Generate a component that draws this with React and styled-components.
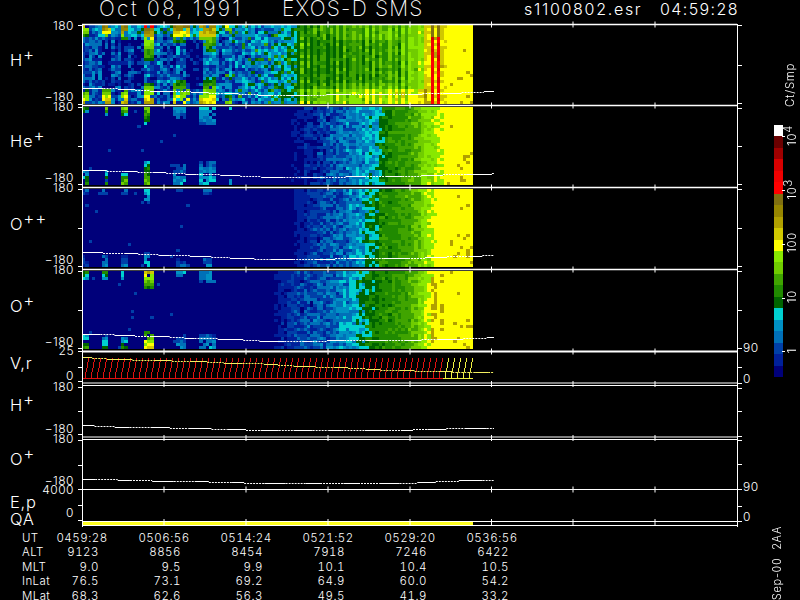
import React from 'react'
import styled, { createGlobalStyle } from 'styled-components'

const GlobalStyle = createGlobalStyle`
  html, body { margin: 0; padding: 0; background: #000; }
  #root { width: 800px; height: 600px; overflow: hidden; }
`

const PALETTE = [
  '#00007a', '#00209a', '#0040a8', '#0070b8', '#0090c4', '#00d0d0',
  '#006400', '#208a00', '#40a400', '#70cc00', '#88e800', '#ffff00',
  '#d0c800', '#b0a000', '#968600', '#807010', '#ff0000', '#f00000',
  '#d80000', '#a00000', '#6a0000', '#ffffff',
]

const TICK_X = [164, 246, 328, 410, 491.5, 573, 655]
const ROWS = 26
const COLS = 120

const Page = styled.div`
  width: 800px;
  height: 600px;
  display: flex;
  background: #000;
  color: #fff;
  font-family: Inter, "Liberation Sans", sans-serif;
  font-weight: 300;
  overflow: hidden;
`
const Main = styled.div`
  width: 770px;
  flex: none;
`
const TitleBar = styled.div`
  height: 24px;
  padding-left: 99px;
  display: grid;
  grid-template-columns: 183px 242px 136px auto;
  align-items: center;
  box-sizing: border-box;
  padding-bottom: 7px;
  white-space: nowrap;
`
const BigTitle = styled.span`
  font-size: 21px;
  font-weight: 200;
  letter-spacing: ${p => p.$spacing}px;
  line-height: 16px;
`
const SmallTitle = styled.span`
  font-size: 16px;
  letter-spacing: ${p => p.$spacing}px;
  line-height: 14px;
`
const Row = styled.div`
  height: ${p => p.$h}px;
  display: flex;
`
const Gutter = styled.div`
  width: 78px;
  flex: none;
  box-sizing: border-box;
  padding-left: 10px;
  display: flex;
`
const Species = styled.div`
  width: 44px;
  flex: none;
  margin-top: ${p => p.$top}px;
  display: flex;
  flex-direction: column;
  gap: ${p => p.$gap || 0}px;
  font-size: 16.5px;
  font-weight: 300;
  line-height: 14px;
  letter-spacing: 0.8px;
`
const Plus = styled.span`
  font-size: 17px;
  line-height: 0;
  vertical-align: 6px;
`
const AxisCol = styled.div`
  width: 20px;
  flex: none;
  margin-top: ${p => p.$top}px;
  height: ${p => p.$span}px;
  display: flex;
  flex-direction: column;
  justify-content: space-between;
  align-items: ${p => (p.$right ? 'flex-start' : 'flex-end')};
  font-size: 12px;
  line-height: 10px;
  letter-spacing: 0.5px;
  white-space: nowrap;
  margin-left: ${p => (p.$right ? 1 : 0)}px;
`
const ChartSvg = styled.svg`
  display: block;
  flex: none;
  overflow: visible;
`
const HeatGroup = styled.g`
  filter: blur(0.4px);
`
const Table = styled.div`
  padding: 4px 0 0 22px;
  display: grid;
  grid-template-columns: 19px repeat(6, 82px);
  grid-auto-rows: 14.4px;
  font-size: 11.5px;
  line-height: 14px;
  letter-spacing: 0.5px;
  white-space: nowrap;
  font-variant-numeric: tabular-nums;
`
const RowName = styled.div`
  letter-spacing: 0.4px;
`
const TimeCell = styled.div`
  text-align: center;
`
const ValueCell = styled.div`
  text-align: right;
  padding-right: 24px;
`
const Sidebar = styled.div`
  width: 30px;
  flex: none;
  display: flex;
  flex-direction: column;
`
const Vertical = styled.div`
  writing-mode: vertical-rl;
  transform: rotate(180deg);
  white-space: pre;
  font-size: 11.5px;
  line-height: 11px;
  letter-spacing: 0.7px;
`
const Unit = styled(Vertical)`
  height: 42px;
  margin: 65px 0 0 15px;
`
const Scale = styled.div`
  margin: 18px 0 0 4px;
  height: 252px;
  display: flex;
`
const Bar = styled.div`
  width: 9px;
  flex: none;
  display: flex;
  flex-direction: column-reverse;
`
const Segment = styled.div`
  flex: 1;
  background: ${p => p.$color};
`
const ScaleLabels = styled.div`
  margin-top: -16.75px;
  display: flex;
  flex-direction: column;
`
const ScaleLabel = styled.div`
  position: relative;
  height: 57.25px;
  width: 15px;
  display: flex;
  align-items: center;
  justify-content: flex-end;
  &::before {
    content: '';
    position: absolute;
    left: -1px;
    top: 28px;
    width: 3px;
    height: 1px;
    background: #fff;
  }
`
const Exp = styled.span`
  font-size: 11px;
  position: relative;
  left: 4px;
`
const Stamp = styled(Vertical)`
  margin: auto 0 0 2px;
  font-size: 11px;
`

function mulberry(seed) {
  let a = seed
  return () => {
    a = (a + 0x6d2b79f5) | 0
    let t = Math.imul(a ^ (a >>> 15), 1 | a)
    t = (t + Math.imul(t ^ (t >>> 7), 61 | t)) ^ t
    return ((t ^ (t >>> 14)) >>> 0) / 4294967296
  }
}

function interp(points, x) {
  if (x <= points[0][0]) return points[0][1]
  for (let i = 1; i < points.length; i++) {
    if (x <= points[i][0]) {
      const [x0, y0] = points[i - 1]
      const [x1, y1] = points[i]
      return y0 + ((y1 - y0) * (x - x0)) / (x1 - x0)
    }
  }
  return points[points.length - 1][1]
}

const inRange = (x, ranges) => ranges.some(([a, b]) => x >= a && x <= b)

const hydrogen = (x, r, lv, rand) => {
  let out = lv
  if (inRange(x, [[103, 110], [120, 127], [134, 145], [186, 204]]) && r > 4 && r < 21) {
    out = rand() < 0.22 ? 1 + rand() * 2 : 0
  }
  if (r < 4 && x > 95 && x < 250) out += 2
  if (x > 225 && x < 300 && rand() < 0.1) out = 6 + rand() * 2
  if (x > 298 && x < 426) {
    out += Math.sin((2 * Math.PI * x) / 7.3) * 1.2
    if (x > 310 && x < 400 && r > 4 && r < 19) out -= 0.8
    if (r > 20) out += 1.6
    out = Math.max(out, 6)
  }
  if (x > 426 && x < 446) {
    out = 10.6 + rand() * 2
    if (inRange(x, [[431, 434], [437, 440], [442, 445]])) out = r < 4 ? 15 : 18 - rand() * 2
  }
  return out
}

const oxygen = (x, r, lv, rand) => {
  if (x > 430 && x < 442 && Math.sin(x * 1.4) > 0.2 && rand() < 0.45) return 13
  return lv
}

const PANELS = {
  h: {
    seed: 11, y0: 25, y1: 104, extra: hydrogen,
    profile: [[82, 2], [240, 2.6], [265, 3.6], [285, 4.6], [300, 6.4], [320, 7.6], [400, 8.6], [420, 9.8], [426, 11], [473, 11]],
    noise: [[82, 2], [250, 2.2], [300, 1.6], [330, 0.6], [426, 0.6], [446, 0]],
    bursts: [
      { x: 84.5, w: 2.5, lv: 12, top: 4, bottom: 5 },
      { x: 107, w: 3.5, lv: 13, top: 4, bottom: 6 },
      { x: 124, w: 3.5, lv: 13, top: 5, bottom: 6 },
      { x: 149, w: 4.5, lv: 13, top: 12, bottom: 7 },
      { x: 181, w: 6.5, lv: 12, top: 6, bottom: 8 },
      { x: 207, w: 8, lv: 12, top: 9, bottom: 9 },
      { x: 228, w: 3, lv: 9, top: 2, bottom: 4 },
    ],
  },
  he: {
    seed: 23, y0: 107, y1: 185,
    profile: [[82, 0], [280, 0], [300, 0.4], [320, 1.6], [350, 3], [375, 4.5], [385, 6.6], [410, 7.8], [428, 9.6], [438, 10.4], [445, 11], [473, 11]],
    noise: [[82, 0], [285, 0.2], [320, 1.4], [378, 1.4], [392, 0.7], [440, 0.8], [446, 0]],
    bursts: [
      { x: 86, w: 2.5, lv: 7, top: 2, bottom: 5 },
      { x: 106.5, w: 2.5, lv: 8, top: 3, bottom: 5 },
      { x: 124, w: 3, lv: 9, top: 3, bottom: 4 },
      { x: 147, w: 3.5, lv: 9, top: 6, bottom: 8 },
      { x: 180, w: 5.5, lv: 4, top: 4, bottom: 7 },
      { x: 207, w: 7, lv: 5, top: 6, bottom: 8 },
      { x: 229, w: 2, lv: 5, top: 1, bottom: 2 },
    ],
  },
  opp: {
    seed: 37, y0: 189, y1: 267,
    profile: [[82, 0], [290, 0], [302, 1], [340, 2.5], [365, 4.5], [380, 6.6], [410, 8], [428, 10], [436, 11], [473, 11]],
    noise: [[82, 0], [295, 0.2], [320, 1.4], [375, 1.4], [392, 0.6], [432, 0.8], [446, 0]],
    bursts: [
      { x: 86, w: 2.5, lv: 2, top: 2, bottom: 4 },
      { x: 106, w: 2.5, lv: 3, top: 2, bottom: 4 },
      { x: 124, w: 3, lv: 3, top: 2, bottom: 4 },
      { x: 147, w: 3, lv: 5, top: 5, bottom: 5 },
      { x: 180, w: 5, lv: 2, top: 1, bottom: 3 },
      { x: 207, w: 6, lv: 3, top: 2, bottom: 3 },
    ],
  },
  o: {
    seed: 53, y0: 271, y1: 349, extra: oxygen,
    profile: [[82, 0], [270, 0], [285, 1], [330, 2.5], [355, 4], [370, 6.4], [410, 8], [425, 10], [432, 11], [473, 11]],
    noise: [[82, 0], [272, 0.2], [300, 1.4], [365, 1.4], [382, 0.6], [428, 0.7], [446, 0]],
    bursts: [
      { x: 85, w: 3, lv: 7, top: 3, bottom: 5 },
      { x: 106, w: 2.5, lv: 6, top: 3, bottom: 4 },
      { x: 124, w: 3, lv: 6, top: 3, bottom: 4 },
      { x: 150, w: 5, lv: 12, top: 6, bottom: 6 },
      { x: 180, w: 5, lv: 4, top: 2, bottom: 5 },
      { x: 207, w: 7, lv: 4, top: 4, bottom: 5 },
    ],
  },
}

function levelAt(panel, x, r, rand, colNoise) {
  const amp = interp(panel.noise, x)
  let lv = interp(panel.profile, x) + (rand() - 0.5) * 2 * amp + colNoise * amp * 0.6
  if (x < 270 && amp < 0.1 && rand() < 0.012) lv = 2
  for (const b of panel.bursts) {
    if (Math.abs(x - b.x) > b.w) continue
    const isTop = r < ROWS / 2
    const dist = isTop ? r : ROWS - 1 - r
    const reach = isTop ? b.top : b.bottom
    if (dist < reach && rand() > 0.12) {
      const v = b.lv * (1 - (0.55 * dist) / reach) + (rand() - 0.5) * 1.8
      lv = Math.max(lv, Math.min(v, 15))
    }
  }
  if (panel.extra) lv = panel.extra(x, r, lv, rand)
  if (x >= 446) {
    const chance = r > 14 ? 0.05 + ((x - 446) / 27) * 0.14 : 0.025
    lv = rand() < chance ? 13 : 11
  }
  return Math.max(0, Math.min(21, Math.round(lv)))
}

function heatPaths(panel) {
  const rand = mulberry(panel.seed)
  const cellH = (panel.y1 - panel.y0) / ROWS
  const cellW = (473 - 82) / COLS
  const d = {}
  for (let c = 0; c < COLS; c++) {
    const x0 = Math.round(82 + c * cellW)
    const x1 = Math.round(82 + (c + 1) * cellW)
    const colNoise = rand() - 0.5
    for (let r = 0; r < ROWS; r++) {
      const y0 = Math.round(panel.y0 + r * cellH)
      const y1 = Math.round(panel.y0 + (r + 1) * cellH)
      const color = PALETTE[levelAt(panel, x0 + 1.5, r, rand, colNoise)]
      d[color] = (d[color] || '') + `M${x0} ${y0}H${x1}V${y1}H${x0}Z`
    }
  }
  return Object.entries(d)
}

// orbit track: short steps, every other one dotted
function stepPieces(points, seed) {
  const rand = mulberry(seed)
  const pieces = []
  let x = 82
  let dotted = false
  while (x < 494) {
    const len = dotted ? 14 + rand() * 10 : 10 + rand() * 16
    const end = Math.min(x + len, 494)
    const y = Math.round(interp(points, (x + end) / 2))
    pieces.push({ x1: x, x2: end, y, dotted })
    x = end
    dotted = !dotted
  }
  return pieces
}

function Track({ points, seed, color = '#fff' }) {
  return stepPieces(points, seed).map((p, i) => (
    <line key={i} x1={p.x1} x2={p.x2} y1={p.y + 0.5} y2={p.y + 0.5} stroke={color} strokeWidth={1}
      strokeDasharray={p.dotted ? '2 1' : undefined} />
  ))
}

function Heat({ panel }) {
  const paths = React.useMemo(() => heatPaths(panel), [panel])
  return (
    <HeatGroup shapeRendering="crispEdges">
      {paths.map(([fill, d]) => <path key={fill} fill={fill} d={d} />)}
    </HeatGroup>
  )
}

function Velocity() {
  const red = []
  const yellow = []
  for (let i = 0; 85 + i * 6 < 470; i++) {
    const x = 85 + i * 6
    const s = `M${x} 378L${x + 1} 372L${x + 2} 368L${x + 3} 362L${x + 4} 358`
    if (x < 443) red.push(s)
    else yellow.push(s)
  }
  return (
    <g fill="none" strokeWidth={1} shapeRendering="crispEdges">
      <path d={red.join('') + 'M82 378.5H443'} stroke="#e01010" />
      <path d={yellow.join('') + 'M443 378.5H473'} stroke="#f0f040" />
    </g>
  )
}

function Chart({ top, h, lines, marks, left, right, children }) {
  return (
    <ChartSvg width={664} height={h} viewBox={`78 ${top} 664 ${h}`}>
      {children}
      <g stroke="#fff" fill="none">
        {lines.map(([y, w]) => (
          <line key={y} x1={82} x2={737} y1={y} y2={y} strokeWidth={w} />
        ))}
        {marks.map(y =>
          TICK_X.map(x => <line key={`${x}-${y}`} x1={x} x2={x} y1={y - 3} y2={y + 3} strokeWidth={1} />),
        )}
        {left.map(y => (
          <line key={y} x1={78} x2={82} y1={y + 0.5} y2={y + 0.5} strokeWidth={1} />
        ))}
        {right.map(y => (
          <line key={y} x1={737} x2={742} y1={y + 0.5} y2={y + 0.5} strokeWidth={1} />
        ))}
        <line x1={82.5} x2={82.5} y1={top} y2={top + h} strokeWidth={1} />
        <line x1={737.5} x2={737.5} y1={top} y2={top + h} strokeWidth={1} />
      </g>
    </ChartSvg>
  )
}

const CHARTS = [
  {
    top: 24, h: 81, name: 'H', speciesY: 60, labels: ['180', '\u2212180'], at: [26, 97],
    lines: [[24.5, 1.4]], marks: [24.5], left: [25, 65, 104], right: [25, 65, 103],
    panel: PANELS.h, track: [[82, 87], [100, 88], [270, 95], [400, 94], [470, 92], [494, 91]], seed: 3,
  },
  {
    top: 105, h: 82, name: 'He', speciesY: 141, labels: ['180', '\u2212180'], at: [107, 178],
    lines: [[105.5, 1.6]], marks: [105.5], left: [107, 146, 184], right: [108, 146, 184],
    panel: PANELS.he, track: [[82, 169], [100, 170], [270, 177], [400, 176], [470, 174], [494, 173]], seed: 4,
  },
  {
    top: 187, h: 82, name: 'O', plus: '++', speciesY: 224, labels: ['180', '\u2212180'], at: [188, 260],
    lines: [[187.5, 1.6]], marks: [187.5], left: [189, 228, 266], right: [189, 228, 266],
    panel: PANELS.opp, track: [[82, 251], [100, 252], [270, 259], [400, 258], [470, 256], [494, 255]], seed: 5,
  },
  {
    top: 269, h: 82, name: 'O', speciesY: 306, labels: ['180', '\u2212180'], at: [270, 342],
    lines: [[269.5, 1.6]], marks: [269.5], left: [271, 310, 348], right: [271, 310, 348],
    panel: PANELS.o, track: [[82, 333], [100, 334], [270, 341], [400, 340], [470, 338], [494, 337]], seed: 6,
  },
  {
    top: 351, h: 34, name: 'V,r', noPlus: true, speciesY: 363, labels: ['25', '0'], at: [351, 376],
    rightLabels: ['90', '0'], rightAt: [348, 379],
    lines: [[351.5, 2], [383, 1]], marks: [351.5, 384], left: [351, 367, 381], right: [348, 367, 383],
    velocity: true, track: [[82, 357], [100, 358], [270, 364], [400, 370], [470, 372], [494, 372]], seed: 7, trackColor: '#f4f060',
  },
  {
    top: 385, h: 54, name: 'H', speciesY: 405, labels: ['180', '\u2212180'], at: [387, 429],
    lines: [[385.5, 1], [437, 1]], marks: [438], left: [387, 411, 434], right: [388, 411, 436],
    track: [[82, 425], [95, 426], [270, 430], [400, 430], [470, 428], [494, 428]], seed: 8,
  },
  {
    top: 439, h: 50, name: 'O', speciesY: 459, labels: ['180', '\u2212180'], at: [439, 481],
    lines: [[439.5, 1]], marks: [], left: [440, 465], right: [440, 464],
    track: [[82, 478], [95, 479], [270, 483], [400, 483], [470, 480], [494, 480]], seed: 9,
  },
  {
    top: 489, h: 38, name: 'E,p', second: 'QA', noPlus: true, speciesY: 502, labels: ['4000', '0'], at: [490, 513],
    rightLabels: ['90', '0'], rightAt: [487, 517],
    lines: [[489.5, 1], [521.5, 1], [525.5, 1]], marks: [489.5, 522], left: [489, 505, 520], right: [489, 506, 521],
    qa: true,
  },
]

const COLUMNS = [
  ['ALT', '9123', '8856', '8454', '7918', '7246', '6422'],
  ['MLT', '9.0', '9.5', '9.9', '10.1', '10.4', '10.5'],
  ['InLat', '76.5', '73.1', '69.2', '64.9', '60.0', '54.2'],
  ['MLat', '68.3', '62.6', '56.3', '49.5', '41.9', '33.2'],
]
const TIMES = ['0459:28', '0506:56', '0514:24', '0521:52', '0529:20', '0536:56']

function ChartRow({ c }) {
  return (
    <Row $h={c.h}>
      <Gutter>
        <Species $top={c.speciesY - 7 - c.top} $gap={c.second ? 3 : 0}>
          <div>
            {c.name}
            {!c.noPlus && <Plus>{c.plus || '+'}</Plus>}
          </div>
          {c.second && <div>{c.second}</div>}
        </Species>
        <AxisCol $top={c.at[0] - 5 - c.top} $span={c.at[1] - c.at[0] + 10}>
          {c.labels.map(l => <span key={l}>{l}</span>)}
        </AxisCol>
      </Gutter>
      <Chart top={c.top} h={c.h} lines={c.lines} marks={c.marks} left={c.left} right={c.right}>
        {c.panel && <Heat panel={c.panel} />}
        {c.velocity && <Velocity />}
        {c.qa && <rect x={82} y={522} width={391} height={3.5} fill="#ffff20" />}
        {c.track && <Track points={c.track} seed={c.seed} color={c.trackColor} />}
      </Chart>
      {c.rightLabels && (
        <AxisCol $right $top={c.rightAt[0] - 5 - c.top} $span={c.rightAt[1] - c.rightAt[0] + 10}>
          {c.rightLabels.map(l => <span key={l}>{l}</span>)}
        </AxisCol>
      )}
    </Row>
  )
}

export default function App() {
  return (
    <Page>
      <GlobalStyle />
      <Main>
        <TitleBar>
          <BigTitle $spacing={2.3}>Oct 08, 1991</BigTitle>
          <BigTitle $spacing={1.2}>EXOS-D SMS</BigTitle>
          <SmallTitle $spacing={1.7}>s1100802.esr</SmallTitle>
          <SmallTitle $spacing={1.4}>04:59:28</SmallTitle>
        </TitleBar>
        {CHARTS.map(c => <ChartRow key={c.top} c={c} />)}
        <Table>
          <RowName>UT</RowName>
          {TIMES.map(t => <TimeCell key={t}>{t}</TimeCell>)}
          {COLUMNS.map(([name, ...vals]) => (
            <React.Fragment key={name}>
              <RowName>{name}</RowName>
              {vals.map((v, i) => <ValueCell key={i}>{v}</ValueCell>)}
            </React.Fragment>
          ))}
        </Table>
      </Main>
      <Sidebar>
        <Unit>Ct/Smp</Unit>
        <Scale>
          <Bar>
            {PALETTE.map(c => <Segment key={c} $color={c} />)}
          </Bar>
          <ScaleLabels>
            <ScaleLabel><Vertical>10<Exp>4</Exp></Vertical></ScaleLabel>
            <ScaleLabel><Vertical>10<Exp>3</Exp></Vertical></ScaleLabel>
            <ScaleLabel><Vertical>100</Vertical></ScaleLabel>
            <ScaleLabel><Vertical>10</Vertical></ScaleLabel>
            <ScaleLabel><Vertical>1</Vertical></ScaleLabel>
          </ScaleLabels>
        </Scale>
        <Stamp>Sep-00  2AA</Stamp>
      </Sidebar>
    </Page>
  )
}
